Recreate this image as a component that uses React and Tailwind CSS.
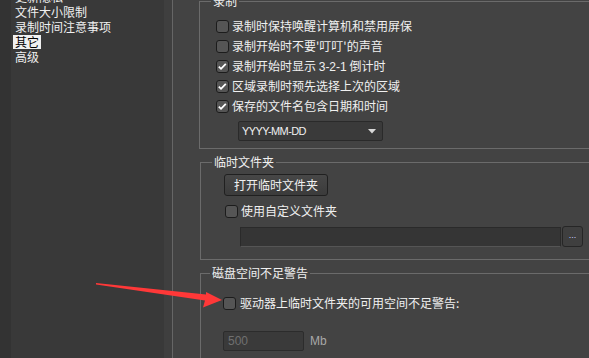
import React from "react";

const cjk = { fontFamily: '"Noto Sans CJK SC", "Noto Sans", sans-serif' };
const latin = { fontFamily: '"Liberation Sans", Arial, sans-serif' };

function Check({ checked }) {
  return (
    <span className="w-[13px] h-[13px] shrink-0 rounded-[3px] border border-[#1c1c1c] bg-[#555555] flex items-center justify-center">
      {checked && (
        <svg width="11" height="11" viewBox="0 0 11 11">
          <path d="M1.8 5.6 L4 7.8 L8.8 2.8" fill="none" stroke="#ffffff" strokeWidth="1.8" />
        </svg>
      )}
    </span>
  );
}

function Row({ checked, children, className = "" }) {
  return (
    <div className={"h-[20px] flex items-center gap-[3px] " + className}>
      <Check checked={checked} />
      <span className="block text-[12px] leading-[14px] text-[#f0f0f0] whitespace-nowrap">{children}</span>
    </div>
  );
}

function Group({ title, labelLeft, className = "", children }) {
  return (
    <div className={"relative w-[420px] border border-[#6b6b6b] " + className}>
      <span className={"absolute -top-[8px] block h-[14px] px-[2px] bg-[#434343] text-[12px] leading-[14px] text-[#f0f0f0] " + labelLeft}>
        {title}
      </span>
      {children}
    </div>
  );
}

export default function App() {
  const items = ["更新隐私", "文件大小限制", "录制时间注意事项", "其它", "高级"];

  return (
    <div className="relative w-[589px] h-[358px] overflow-hidden flex bg-[#434343]" style={cjk}>
      {/* left list */}
      <div className="w-[11px] bg-[#333333]" />
      <div className="w-[153px] bg-[#393939] pl-[2px]">
        <div className="-mt-[11px]">
          {items.map((t) => (
            <div key={t} className="h-[15px] flex items-center">
              <span
                className={
                  "block h-[14px] px-[2px] text-[12px] leading-[14px] " +
                  (t === "其它" ? "bg-[#f0f0f0] text-black" : "text-[#f0f0f0]")
                }
              >
                {t}
              </span>
            </div>
          ))}
        </div>
      </div>
      <div className="w-[8px] bg-[#3f3f3f]" />
      <div className="w-px bg-[#666666]" />

      {/* right content */}
      <div className="flex-1 overflow-hidden pt-[1px] pl-[26px]">
        <Group title="录制" labelLeft="left-[11px]" className="pt-[14px] pb-[7px] pl-[16px]">
          <Row checked={false}>录制时保持唤醒计算机和禁用屏保</Row>
          <Row checked={false}>录制开始时不要'叮叮'的声音</Row>
          <Row checked>
            录制开始时显示 <span style={latin} className="text-[12px]">3-2-1</span> 倒计时
          </Row>
          <Row checked>区域录制时预先选择上次的区域</Row>
          <Row checked>保存的文件名包含日期和时间</Row>
          <div className="mt-[5px] ml-[22px] w-[145px] h-[20px] rounded-[2px] border border-[#2a2a2a] bg-[#3a3a3a] flex items-center justify-between pl-[3px] pr-[6px]">
            <span style={latin} className="text-[11px] tracking-[-0.6px] text-[#f0f0f0]">YYYY-MM-DD</span>
            <svg width="8" height="5" viewBox="0 0 8 5">
              <path d="M0 0 H8 L4 4.5 Z" fill="#d8d8d8" />
            </svg>
          </div>
        </Group>

        <Group title="临时文件夹" labelLeft="left-[11px]" className="mt-[13px] ml-px pt-[11px] pb-[12px]">
          <button className="ml-[23px] w-[104px] h-[22px] rounded-[3px] border border-[#202020] bg-gradient-to-b from-[#474747] to-[#3b3b3b] text-[12px] text-[#f0f0f0] flex items-center justify-center">
            打开临时文件夹
          </button>
          <Row checked={false} className="mt-[5px] pl-[24px]">使用自定义文件夹</Row>
          <div className="mt-[5px] ml-[39px] flex items-end gap-px">
            <div className="w-[321px] h-[20px] border border-[#2a2a2a] border-b-[#555555] bg-[#353535]" />
            <div className="w-[21px] h-[21px] rounded-[3px] border border-[#262626] bg-[#3f3f3f] flex items-center justify-center">
              <span style={latin} className="text-[9px] leading-none text-[#c8d0ff] -mt-[2px]">...</span>
            </div>
          </div>
        </Group>

        <Group title="磁盘空间不足警告" labelLeft="left-[9px]" className="mt-[13px] ml-px pt-[19px] pb-[20px]">
          <Row checked={false} className="pl-[22px] gap-[4px]">驱动器上临时文件夹的可用空间不足警告:</Row>
          <div className="mt-[18px] ml-[22px] flex items-center">
            <div className="w-[81px] h-[20px] rounded-[2px] border border-[#2c2c2c] bg-[#3a3a3a] flex items-center pl-[4px]">
              <span style={latin} className="text-[12px] text-[#707070]">500</span>
            </div>
            <span style={latin} className="ml-[6px] text-[12px] text-[#a8a8a8]">Mb</span>
          </div>
        </Group>
      </div>

      {/* red arrow annotation */}
      <svg className="absolute left-0 top-0 pointer-events-none" width="589" height="358" viewBox="0 0 589 358">
        <polygon
          points="96,283 206,294.5 206,292 222,300 203,307.5 205,300.5 96,284.5"
          fill="#ff3838"
        />
      </svg>
    </div>
  );
}
